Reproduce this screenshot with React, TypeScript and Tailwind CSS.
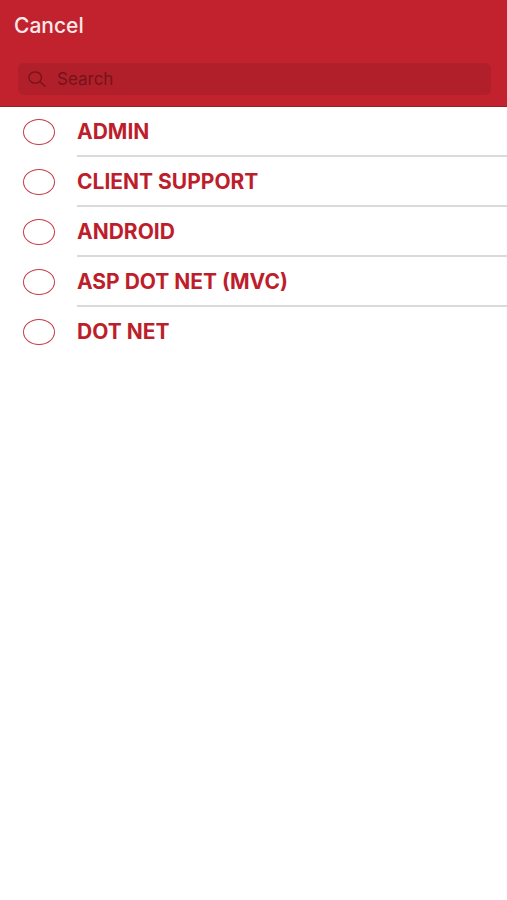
import { useState } from "react";

const departments = ["ADMIN", "CLIENT SUPPORT", "ANDROID", "ASP DOT NET (MVC)", "DOT NET"];

function SearchIcon() {
  return (
    <svg className="h-4 w-[18px] shrink-0" viewBox="0 0 18 16" fill="none" stroke="#74131b" strokeWidth="1.3" aria-hidden="true">
      <ellipse cx="7.2" cy="6.5" rx="6.3" ry="5.7" />
      <path d="M11.7 10.6 17.3 15.2" strokeLinecap="round" />
    </svg>
  );
}

export default function App() {
  const [selected, setSelected] = useState("");
  const [query, setQuery] = useState("");
  const visible = departments.filter((name) => name.includes(query.toUpperCase()));

  return (
    <div className="min-h-screen bg-white font-['Inter',sans-serif]">
      <header className="border-b border-[#98202b] bg-[#c2222e] px-[14px] pt-[13px] pb-[11px]">
        <button type="button" className="block text-[21px] leading-[26px] font-medium text-[#fbe9ea]">
          Cancel
        </button>
        <label htmlFor="department-search" className="mx-1 mt-6 mr-0.5 flex h-8 items-center gap-[11px] rounded-md bg-[#b01f2a] px-[10px]">
          <SearchIcon />
          <input
            id="department-search"
            type="text"
            aria-label="Search"
            placeholder="Search"
            value={query}
            onChange={(event) => setQuery(event.target.value)}
            className="min-w-0 flex-1 bg-transparent text-[17px] leading-6 text-[#74131b] outline-none placeholder:text-[#74131b]"
          />
        </label>
      </header>
      <ul>
        {visible.map((name) => (
          <li key={name} className="group">
            <label className="flex h-[50px] cursor-pointer items-center pl-[23px]">
              <input
                type="radio"
                name="department"
                checked={selected === name}
                onChange={() => setSelected(name)}
                className="h-[26px] w-8 shrink-0 appearance-none rounded-[50%] border border-[#c63b48] checked:bg-[#c2222e]"
              />
              <span className="ml-[22px] flex h-full flex-1 items-center border-b-2 border-[#d9dada] pt-0.5 text-[21px] leading-6 font-bold text-[#bd1e2c] group-last:border-transparent">
                {name}
              </span>
            </label>
          </li>
        ))}
      </ul>
    </div>
  );
}
